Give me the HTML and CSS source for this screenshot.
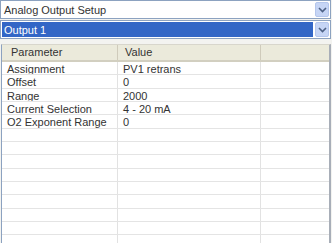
FILE: index.html
```html
<!DOCTYPE html>
<html lang="en">
<head>
  <meta charset="UTF-8" />
  <title>Analog Output Setup</title>
  <link rel="stylesheet" href="styles.css">
</head>
<body>
  <div class="combo">
    <span class="combo-text">Analog Output Setup</span>
    <span class="combo-btn"><svg width="9" height="6" viewBox="0 0 9 6"><path d="M1 1 L4.5 4.5 L8 1" fill="none" stroke="#4d6185" stroke-width="1.6"/></svg></span>
  </div>
  <div class="combo">
    <span class="combo-text selected">Output 1</span>
    <span class="combo-btn"><svg width="9" height="6" viewBox="0 0 9 6"><path d="M1 1 L4.5 4.5 L8 1" fill="none" stroke="#4d6185" stroke-width="1.6"/></svg></span>
  </div>

  <div class="list">
    <div class="row head">
      <div class="cell">Parameter</div>
      <div class="cell">Value</div>
      <div class="cell"></div>
    </div>
    <div class="rows" id="rows"></div>
  </div>

  <script>
    const data = [
      ["Assignment", "PV1 retrans"],
      ["Offset", "0"],
      ["Range", "2000"],
      ["Current Selection", "4 - 20 mA"],
      ["O2 Exponent Range", "0"]
    ];
    const rows = document.getElementById("rows");
    for (let i = 0; i < 15; i++) {
      const r = data[i] || ["", ""];
      const row = document.createElement("div");
      row.className = "row";
      row.innerHTML = `<div class="cell">${r[0]}</div><div class="cell">${r[1]}</div><div class="cell"></div>`;
      rows.appendChild(row);
    }
  </script>
</body>
</html>
```

FILE: styles.css
```css
body { margin: 0; background: #f3f3f0; font-family: "Liberation Sans", Arial, sans-serif; font-size: 11px; color: #333; height: 243px; overflow: hidden; }
.combo { display: flex; align-items: center; height: 17px; margin: 0 1px 1px 0; border: 1px solid #8ca2c0; background: #fff; padding: 0 1px 0 1px; }
.combo-text { flex: 1; height: 15px; line-height: 17px; padding-left: 2px; }
.combo-text.selected { background: #3266c6; color: #fff; margin-right: 2px; line-height: 16px; }
.combo-btn { width: 14px; height: 15px; background: #c6d5f5; border: 1px solid #b4c6ec; border-radius: 2px; box-sizing: border-box; display: flex; align-items: center; justify-content: center; }
.list { margin: 5px 1px 0 1px; border-left: 1px solid #8ca2c0; border-right: 2px solid #a8aeb8; border-top: 1px solid #d8d6cc; background: #fff; height: 210px; overflow: hidden; }
.row { display: grid; grid-template-columns: 116px 143px 1fr; height: 13.33px; }
.rows .row { border-bottom: 1px solid #e4e4e4; box-sizing: border-box; }
.row .cell { padding-left: 5px; line-height: 14px; white-space: nowrap; overflow: hidden; }
.rows .cell { border-right: 1px solid #e2e2e2; }
.rows .cell:last-child { border-right: none; }
.row.head { height: 17px; background: #ebeadb; border-bottom: 2px solid #d2cfc0; box-sizing: border-box; }
.head .cell { line-height: 15px; padding-left: 9px; border-right: 1px solid #cfcbbb; }
.head .cell:nth-child(2) { padding-left: 7px; }
.head .cell:last-child { border-right: none; }
```
